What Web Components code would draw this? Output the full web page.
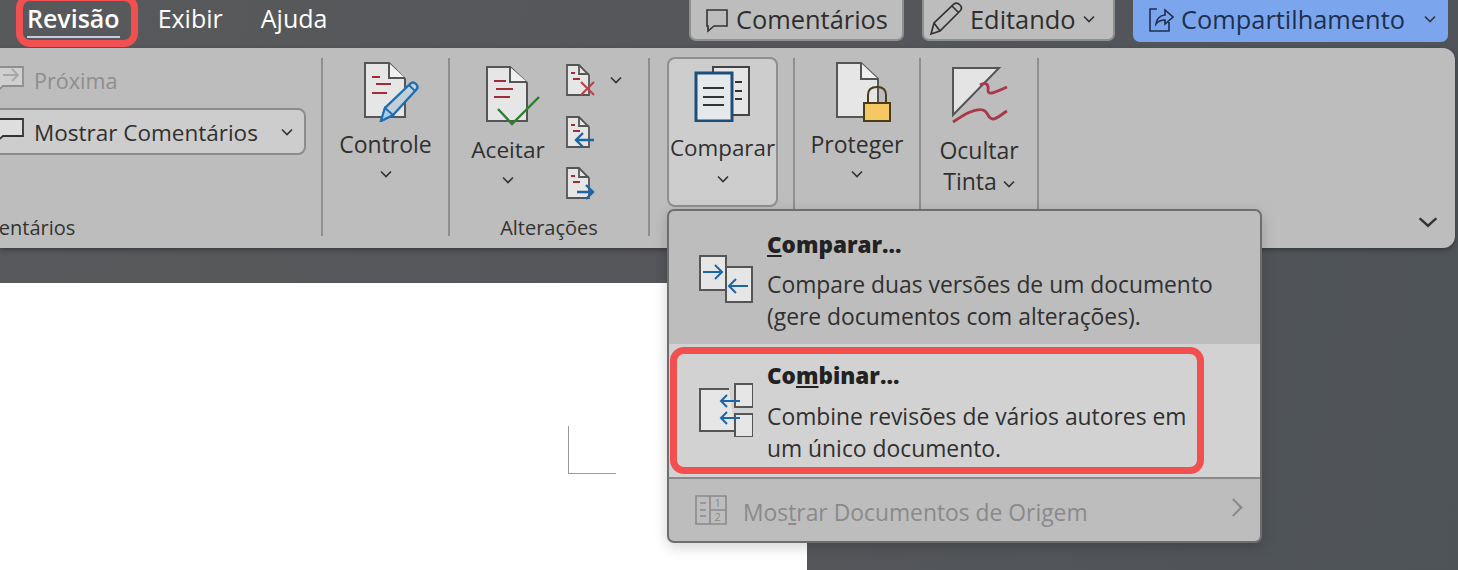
<!DOCTYPE html>
<html lang="pt">
<head>
<meta charset="utf-8">
<title>Revisão</title>
<style>
  html, body { margin: 0; padding: 0; height: 570px; overflow: hidden; background: #525457; }
  svg { display: block; flex: none; }
</style>
</head>
<body>
<word-app>
  <title-bar slot="top">
    <tab-item active>Revisão</tab-item>
    <tab-item>Exibir</tab-item>
    <tab-item>Ajuda</tab-item>
    <top-button slot="right" style="width:215px;--left:14px">
      <svg slot="icon" width="24" height="28" viewBox="0 0 24 28" fill="none" stroke="#333" stroke-width="1.6"><path d="M2 5H22V21H9L3 26V21H2Z"/></svg>
      Comentários
    </top-button>
    <top-button slot="right" style="width:193px;--left:5px;--right:18px" chevron>
      <svg slot="icon" width="34" height="34" viewBox="0 0 34 34" fill="none" stroke="#333" stroke-width="1.7"><path d="M2 32L5 21L25 2Q28 0 31 3Q34 6 31 9L11 29ZM5 21L11 29M23 4L30 11"/></svg>
      Editando
    </top-button>
    <top-button slot="right" style="width:315px;--left:13px;--right:10px" chevron primary>
      <svg slot="icon" width="26" height="28" viewBox="0 0 26 28" fill="none" stroke="#1d3050" stroke-width="1.6"><path d="M9 4H2V26H21V17M8 19Q9 11 17 10V5L25 12L17 19V15Q11 15 8 19Z"/></svg>
      Compartilhamento
    </top-button>
  </title-bar>

  <ribbon-bar slot="ribbon">
    <ribbon-group label="Comentários" style="width:613px;margin-left:-290px;padding-left:290px">
      <div style="display:flex;color:#8e8e8e;font-size:21.6px;line-height:32px;margin-top:7px">
        <svg width="34" height="32" viewBox="0 0 34 32" fill="none" stroke="#8e8e8e" stroke-width="1.8"><path d="M-8 2H23V21H3L-4 27V21H-8Z" fill="#cfcfcf"/><path d="M3 10H17M12 4L18 10L12 16" stroke="#a8a8a8"/></svg>
        Próxima
      </div>
      <select-box style="margin-top:11px">
        <svg slot="icon" width="34" height="32" viewBox="0 0 34 32" fill="none" stroke="#333" stroke-width="1.8"><path d="M-8 3H23V20H3L-4 26V20H-8Z" fill="#dedede"/></svg>
        Mostrar Comentários
      </select-box>
    </ribbon-group>

    <ribbon-group style="width:127px">
      <ribbon-button style="--top:4px;--gap:6px;width:100%">
        <svg slot="icon" width="60" height="60" viewBox="0 0 60 60" fill="none" style="margin-left:14px">
          <path d="M2 1H26L42 17V55H2Z" fill="#e6e6e6" stroke="#555" stroke-width="2"/>
          <path d="M26 1V16H42" fill="#f0f0f0" stroke="#555" stroke-width="2"/>
          <path d="M9 15H17M13 22H28M9 31H24" stroke="#a12b37" stroke-width="2"/>
          <path d="M18 59L22 46L47 22Q50 19 53 22Q56 25 53 28L30 53Z" fill="#c3cfd8" stroke="#1f6fb5" stroke-width="2.4"/>
          <path d="M18 59L22 46L30 53Z" fill="#a9cfec" stroke="#1f6fb5" stroke-width="2"/>
          <path d="M46 23L52 29" stroke="#1f6fb5" stroke-width="2"/>
        </svg>
        Controle
      </ribbon-button>
    </ribbon-group>

    <ribbon-group label="Alterações" style="width:200px">
      <div style="display:flex">
        <ribbon-button style="--top:8px;--gap:8px;width:116px;font-size:22.6px">
          <svg slot="icon" width="60" height="60" viewBox="0 0 60 60" fill="none" style="margin-left:16px">
            <path d="M1 1H24L41 17V55H1Z" fill="#e6e6e6" stroke="#555" stroke-width="2"/>
            <path d="M24 1V16H41" fill="#f0f0f0" stroke="#555" stroke-width="2"/>
            <path d="M8 15H20M10 23H27M8 31H24" stroke="#a12b37" stroke-width="2"/>
            <path d="M12 43L26 58L53 31" stroke="#2f7d32" stroke-width="2.4"/>
          </svg>
          Aceitar
        </ribbon-button>
        <div style="display:flex;flex-direction:column;gap:18px;margin-top:5px">
          <div style="display:flex;align-items:center;gap:8px">
            <svg width="36" height="34" viewBox="0 0 36 34" fill="none">
              <path d="M1 2H13L23 12V32H1Z" fill="#e6e6e6" stroke="#555" stroke-width="1.8"/>
              <path d="M13 2V11H23" stroke="#555" stroke-width="1.8"/>
              <path d="M5 10H9M7 16H14" stroke="#a12b37" stroke-width="1.8"/>
              <path d="M15 19L28 32M28 19L15 32" stroke="#b5464e" stroke-width="2.2"/>
            </svg>
            <chev-icon></chev-icon>
          </div>
          <svg width="36" height="34" viewBox="0 0 36 34" fill="none">
            <path d="M1 2H13L23 12V32H1Z" fill="#e6e6e6" stroke="#555" stroke-width="1.8"/>
            <path d="M13 2V11H23" stroke="#555" stroke-width="1.8"/>
            <path d="M5 10H9M7 16H14" stroke="#a12b37" stroke-width="1.8"/>
            <path d="M28 25H10M17 18L10 25L17 32" stroke="#1a66a8" stroke-width="2.4"/>
          </svg>
          <svg width="36" height="34" viewBox="0 0 36 34" fill="none">
            <path d="M1 1H13L23 11V31H1Z" fill="#e6e6e6" stroke="#555" stroke-width="1.8"/>
            <path d="M13 1V10H23" stroke="#555" stroke-width="1.8"/>
            <path d="M5 9H9M7 15H14" stroke="#a12b37" stroke-width="1.8"/>
            <path d="M11 25H27M20 18L27 25L20 32" stroke="#1a66a8" stroke-width="2.4"/>
          </svg>
        </div>
      </div>
    </ribbon-group>

    <ribbon-group style="width:145px;padding-left:17px">
      <ribbon-button pressed style="--top:7px;--gap:10px;width:111px;height:150px;margin-top:-1px;font-size:22.4px">
        <svg slot="icon" width="57" height="56" viewBox="0 0 57 56" fill="none">
          <path d="M19 1H55V49H19Z" fill="#e6e6e6" stroke="#444" stroke-width="2"/>
          <path d="M41 16H48M41 25H48M41 33H48" stroke="#333" stroke-width="2"/>
          <path d="M2 7H38V55H2Z" fill="#e6e9ec" stroke="#1d4f7c" stroke-width="3"/>
          <path d="M9 22H30M9 31H30M9 39H30" stroke="#333" stroke-width="2"/>
        </svg>
        Comparar
      </ribbon-button>
    </ribbon-group>

    <ribbon-group style="width:126px">
      <ribbon-button style="--top:4px;--gap:6px;width:100%">
        <svg slot="icon" width="56" height="60" viewBox="0 0 56 60" fill="none" style="margin-left:12px">
          <path d="M2 1H26L43 17V55H2Z" fill="#e6e6e6" stroke="#555" stroke-width="2"/>
          <path d="M26 1V17H43" fill="#f0f0f0" stroke="#555" stroke-width="2"/>
          <path d="M33 41V33Q33 25 42 25Q51 25 51 33V41" stroke="#4a3d1a" stroke-width="2"/>
          <path d="M29 41H55V59H29Z" fill="#f5c863" stroke="#4a3d1a" stroke-width="2"/>
        </svg>
        Proteger
      </ribbon-button>
    </ribbon-group>

    <ribbon-group style="width:118px">
      <ribbon-button nochev style="--top:8px;--gap:9px;width:100%;line-height:31px">
        <svg slot="icon" width="60" height="60" viewBox="0 0 60 60" fill="none" style="margin-left:2px">
          <path d="M3 2H49L3 49Z" fill="#e4e4e4" stroke="#555" stroke-width="2"/>
          <path d="M30 19C36 15 39 19 38 24C38 29 42 28 57 21" stroke="#a8384a" stroke-width="2.8"/>
          <path d="M3 56C15 48 25 42 33 44C39 46 37 53 43 53C47 53 52 48 57 45" stroke="#a8384a" stroke-width="2.8"/>
        </svg>
        Ocultar<br>Tinta <chev-icon style="display:inline-block;vertical-align:2px"></chev-icon>
      </ribbon-button>
    </ribbon-group>

    <chev-icon big style="margin:auto 17px 20px auto"></chev-icon>
  </ribbon-bar>

  <doc-page slot="doc"></doc-page>

  <drop-menu slot="over">
    <menu-item style="--pad:18px;--title-gap:8px;height:133px">
      <svg slot="icon" width="54" height="48" viewBox="0 0 54 48" fill="none" style="margin-top:26px">
        <path d="M1 1H27V35H1Z" fill="#e6e6e6" stroke="#555" stroke-width="2"/>
        <path d="M27 12H53V47H27Z" fill="#e6e6e6" stroke="#555" stroke-width="2"/>
        <path d="M4 17H23M16 10L23 17L16 24" stroke="#1a66a8" stroke-width="2"/>
        <path d="M49 31H30M37 24L30 31L37 38" stroke="#1a66a8" stroke-width="2"/>
      </svg>
      <b slot="title"><u>C</u>omparar...</b>
      Compare duas versões de um documento<br>(gere documentos com alterações).
    </menu-item>
    <menu-item hot style="--pad:16px;--title-gap:9px">
      <svg slot="icon" width="54" height="54" viewBox="0 0 54 54" fill="none" style="margin-top:23px">
        <path d="M30 6H1V48H36" fill="#e6e6e6"/>
        <path d="M30 6H1V48H36" stroke="#555" stroke-width="2"/>
        <path d="M36 1H54V24H36Z" fill="#e6e6e6" stroke="#555" stroke-width="2"/>
        <path d="M36 31H54V54H36Z" fill="#e6e6e6" stroke="#555" stroke-width="2"/>
        <path d="M41 18H22M28 12L22 18L28 24M41 35H22M28 29L22 35L28 41" stroke="#1a66a8" stroke-width="2"/>
      </svg>
      <b slot="title">Co<u>m</u>binar...</b>
      Combine revisões de vários autores em<br>um único documento.
    </menu-item>
    <menu-item disabled style="--pad:18px">
      <svg slot="icon" width="32" height="30" viewBox="0 0 32 30" style="margin:-2px 16px 0 -4px" fill="none" stroke="#8a8a8a" stroke-width="1.6">
        <path d="M1 1H31V29H1ZM15 1V29M15 15H31M5 8H11M5 15H11M5 21H11"/>
        <text x="19.5" y="12" font-size="11" font-family="Open Sans" fill="#8a8a8a" stroke="none">1</text>
        <text x="19.5" y="26" font-size="11" font-family="Open Sans" fill="#8a8a8a" stroke="none">2</text>
      </svg>
      Mos<u>t</u>rar Documentos de Origem
    </menu-item>
  </drop-menu>

  <mark-box slot="over" style="left:16px;top:-6px;width:122px;height:53px"></mark-box>
  <mark-box slot="over" style="left:670px;top:347px;width:534px;height:127px"></mark-box>
</word-app>

<script>
  const font = `"Open Sans", "Noto Sans", sans-serif`;

  // every element here is just a template in a shadow root, so one helper is enough
  const define = (name, html) => {
    const template = document.createElement("template");
    template.innerHTML = html;
    customElements.define(name, class extends HTMLElement {
      constructor() {
        super();
        this.attachShadow({ mode: "open" });
        this.shadowRoot.appendChild(template.content.cloneNode(true));
      }
    });
  };

  define("word-app", `
    <style>
      :host {
        display: block; position: relative; width: 1458px; height: 570px; overflow: hidden;
        font-family: ${font}; color: #303030;
        background: linear-gradient(100deg, #58595b 0%, #54565a 60%, #4e5358 100%);
      }
    </style>
    <slot name="top"></slot>
    <slot name="ribbon"></slot>
    <slot name="doc"></slot>
    <slot name="over"></slot>
  `);

  define("title-bar", `
    <style>
      :host { display: flex; height: 48px; padding: 0 10px 0 27px; box-sizing: border-box; }
      .right { display: flex; gap: 18px; margin-left: auto; }
      .tabs { display: flex; gap: 38px; }
    </style>
    <div class="tabs"><slot></slot></div>
    <div class="right"><slot name="right"></slot></div>
  `);

  define("tab-item", `
    <style>
      :host { display: block; color: #fff; font-size: 25px; line-height: 36px; height: 36px; }
      :host([active]) { font-weight: 600; border-bottom: 2px solid #c9c9ea; }
    </style>
    <slot></slot>
  `);

  define("chev-icon", `
    <style>
      :host { display: block; flex: none; width: 12px; height: 8px; }
      :host([big]) { width: 20px; height: 12px; }
      svg { display: block; width: 100%; height: 100%; }
    </style>
    <svg viewBox="0 0 12 8" fill="none" stroke="#333" stroke-width="1.6" preserveAspectRatio="none"><path d="M1 1.5L6 6.5L11 1.5"/></svg>
  `);

  define("top-button", `
    <style>
      :host {
        display: flex; align-items: center; height: 47px; margin-top: -6px; box-sizing: border-box;
        padding: 2px var(--right, 16px) 0 var(--left, 16px);
        background: #bdbdbd; border: 2px solid #8f8f8f; border-radius: 7px;
        font-size: 25.4px; color: #2e2e2e; white-space: nowrap; gap: 7px;
      }
      :host([primary]) { background: #7ba6ee; border-color: #7ba6ee; color: #1d3050; height: 48px; }
      chev-icon { margin-left: auto; }
      :host(:not([chevron])) chev-icon { display: none; }
    </style>
    <slot name="icon"></slot>
    <slot></slot>
    <chev-icon></chev-icon>
  `);

  define("ribbon-bar", `
    <style>
      :host {
        display: flex; height: 200px; margin-right: 3px; background: #bdbdbd;
        border-radius: 0 12px 12px 0; box-shadow: 0 2px 5px rgba(0, 0, 0, 0.35);
      }
    </style>
    <slot></slot>
  `);

  class RibbonGroup extends HTMLElement {
    constructor() {
      super();
      this.attachShadow({ mode: "open" });
      this.shadowRoot.innerHTML = `
        <style>
          :host {
            display: block; position: relative; flex: none; box-sizing: border-box;
            margin: 10px 0 12px; border-right: 2px solid #8e8e8e;
          }
          .label {
            position: absolute; left: 0; right: 0; bottom: -4px; text-align: center;
            font-size: 20px; line-height: 24px; color: #333;
          }
        </style>
        <slot></slot>
        <div class="label">${this.getAttribute("label") || ""}</div>
      `;
    }
  }
  customElements.define("ribbon-group", RibbonGroup);

  define("ribbon-button", `
    <style>
      :host {
        display: flex; flex-direction: column; align-items: center; flex: none; box-sizing: border-box;
        padding-top: var(--top, 4px); font-size: 23px; line-height: 32px; text-align: center; color: #303030;
      }
      :host([pressed]) { background: #cdcdcd; border: 2px solid #8f8f8f; border-radius: 8px; }
      .icon { display: block; margin-bottom: var(--gap, 6px); }
      chev-icon { margin-top: 10px; }
      :host([pressed]) chev-icon { margin-top: 11px; }
      :host([nochev]) chev-icon { display: none; }
    </style>
    <div class="icon"><slot name="icon"></slot></div>
    <div><slot></slot></div>
    <chev-icon></chev-icon>
  `);

  define("select-box", `
    <style>
      :host {
        display: flex; align-items: center; width: 316px; height: 47px; margin-left: -10px; box-sizing: border-box;
        padding: 1px 11px 0 8px; background: #cdcdcd; border: 2px solid #8c8c8c; border-radius: 8px;
        font-size: 22.5px; color: #303030;
      }
      chev-icon { margin-left: auto; }
    </style>
    <slot name="icon"></slot>
    <slot></slot>
    <chev-icon></chev-icon>
  `);

  define("doc-page", `
    <style>
      :host { display: block; position: relative; width: 807px; height: 287px; margin-top: 35px; background: #fff; }
      .crop { position: absolute; left: 568px; top: 143px; width: 47px; height: 47px; border: 1px solid #999; border-width: 0 0 1px 1px; }
    </style>
    <div class="crop"></div>
  `);

  define("drop-menu", `
    <style>
      :host {
        display: block; position: absolute; left: 667px; top: 209px; width: 595px; box-sizing: border-box;
        background: #bdbdbd; border: 2px solid #6e6e6e; border-radius: 7px; overflow: hidden;
        box-shadow: 0 4px 14px rgba(0, 0, 0, 0.18);
      }
    </style>
    <slot></slot>
  `);

  define("menu-item", `
    <style>
      :host {
        display: flex; align-items: flex-start; padding: var(--pad, 17px) 12px 0 30px;
        font-size: 22.85px; line-height: 32px; color: #303030; box-sizing: border-box;
      }
      :host([hot]) { background: #d2d2d2; height: 135px; border-bottom: 2px solid #8a8a8a; }
      :host([disabled]) { height: 62px; color: #8a8a8a; position: relative; }
      :host([disabled])::after {
        content: ""; position: absolute; right: 20px; top: 22px; width: 11px; height: 11px;
        border: solid #8a8a8a; border-width: 2px 2px 0 0; transform: rotate(45deg);
      }
      .icon { width: 68px; flex: none; }
      :host([disabled]) .icon { width: auto; }
      :host([disabled]) .title { display: none; }
      .title { display: block; margin-bottom: var(--title-gap, 8px); font-weight: 700; font-size: 22.5px; color: #222; }
      ::slotted(svg) { display: block; }
    </style>
    <div class="icon"><slot name="icon"></slot></div>
    <div>
      <div class="title"><slot name="title"></slot></div>
      <slot></slot>
    </div>
  `);

  define("mark-box", `
    <style>
      :host { display: block; position: absolute; box-sizing: border-box; border: 7px solid #f25050; border-radius: 14px; }
    </style>
  `);
</script>
</body>
</html>
